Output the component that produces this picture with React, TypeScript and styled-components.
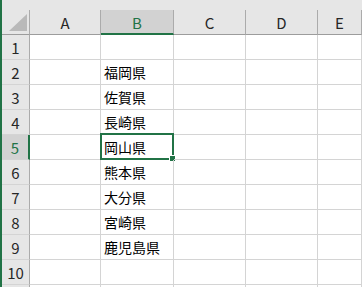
import React from 'react'
import styled, { createGlobalStyle } from 'styled-components'

const GlobalStyle = createGlobalStyle`
    html, body {
        margin: 0;
        padding: 0;
        background: #ffffff;
        overflow: hidden;
    }
    body {
        font-family: "Noto Sans CJK JP", "Noto Sans", sans-serif;
    }
`

const COLUMNS = ['A', 'B', 'C', 'D', 'E']
const COLUMN_WIDTHS = '28px 71px 73px 72px 72px 1fr'
const ROW_COUNT = 11

const cellValues: Record<number, string> = {
    2: '福岡県',
    3: '佐賀県',
    4: '長崎県',
    5: '岡山県',
    6: '熊本県',
    7: '大分県',
    8: '宮崎県',
    9: '鹿児島県',
}

const ACTIVE_ROW = 5
const ACTIVE_COL = 'B'

export default function App() {
    return (
        <>
            <GlobalStyle />
            <Sheet>
                <TopStrip />
                <HeaderRow>
                    <Corner>
                        <svg width="18" height="17" viewBox="0 0 18 17">
                            <polygon points="18,0 18,17 0,17" fill="#b9b9b9" />
                        </svg>
                    </Corner>
                    {COLUMNS.map((col) => (
                        <ColHeader key={col} $active={col === ACTIVE_COL}>
                            {col}
                        </ColHeader>
                    ))}
                </HeaderRow>
                {Array.from({ length: ROW_COUNT }, (_, i) => i + 1).map((row) => (
                    <Row key={row}>
                        <RowHeader $active={row === ACTIVE_ROW}>{row <= 10 ? row : ''}</RowHeader>
                        {COLUMNS.map((col) => (
                            <Cell key={col}>
                                {col === 'B' && cellValues[row]}
                                {col === ACTIVE_COL && row === ACTIVE_ROW && (
                                    <Selection>
                                        <FillHandle />
                                    </Selection>
                                )}
                            </Cell>
                        ))}
                    </Row>
                ))}
            </Sheet>
        </>
    )
}

const Sheet = styled.div`
    width: 362px;
    height: 287px;
    overflow: hidden;
    border-left: 2px solid #217346;
    box-sizing: border-box;
    background: #ffffff;
`

const TopStrip = styled.div`
    height: 10px;
    background: #e6e6e6;
`

const HeaderRow = styled.div`
    display: grid;
    grid-template-columns: ${COLUMN_WIDTHS};
    height: 25px;
    background: #e6e6e6;
`

const Corner = styled.div`
    display: flex;
    align-items: flex-start;
    justify-content: flex-end;
    padding: 4px 2px 0 0;
    border-right: 1px solid #ababab;
    border-bottom: 1px solid #9c9c9c;
    box-sizing: border-box;
`

const ColHeader = styled.div<{ $active?: boolean }>`
    display: flex;
    align-items: center;
    justify-content: center;
    font-size: 15px;
    line-height: 1;
    color: ${(p) => (p.$active ? '#217346' : '#262626')};
    background: ${(p) => (p.$active ? '#d2d2d2' : '#e6e6e6')};
    border-right: 1px solid #ababab;
    border-bottom: ${(p) => (p.$active ? '2px solid #217346' : '1px solid #9c9c9c')};
    box-sizing: border-box;
    padding-top: ${(p) => (p.$active ? '1px' : '0')};
`

const Row = styled.div`
    display: grid;
    grid-template-columns: ${COLUMN_WIDTHS};
    height: 25px;
`

const RowHeader = styled.div<{ $active?: boolean }>`
    display: flex;
    align-items: center;
    justify-content: center;
    font-size: 15px;
    line-height: 1;
    color: ${(p) => (p.$active ? '#217346' : '#262626')};
    background: ${(p) => (p.$active ? '#d2d2d2' : '#e6e6e6')};
    border-right: ${(p) => (p.$active ? '2px solid #217346' : '1px solid #ababab')};
    border-bottom: 1px solid #d4d4d4;
    box-sizing: border-box;
`

const Cell = styled.div`
    position: relative;
    display: flex;
    align-items: center;
    padding: 0 0 0 3px;
    font-size: 14px;
    line-height: 1;
    color: #000000;
    border-right: 1px solid #d4d4d4;
    border-bottom: 1px solid #d4d4d4;
    box-sizing: border-box;
    white-space: nowrap;
`

const Selection = styled.div`
    position: absolute;
    left: -1px;
    top: -2px;
    right: -1px;
    bottom: -1px;
    border: 2px solid #217346;
    pointer-events: none;
`

const FillHandle = styled.div`
    position: absolute;
    right: -4px;
    bottom: -4px;
    width: 5px;
    height: 5px;
    background: #217346;
    border: 1px solid #ffffff;
`
